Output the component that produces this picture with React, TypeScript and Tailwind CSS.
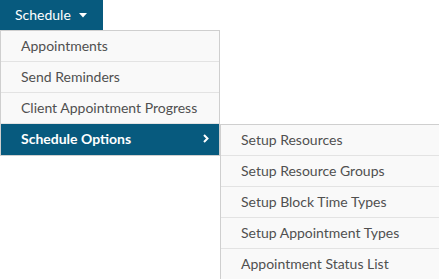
const mainItems = ['Appointments', 'Send Reminders', 'Client Appointment Progress'];

const subItems = [
  'Setup Resources',
  'Setup Resource Groups',
  'Setup Block Time Types',
  'Setup Appointment Types',
  'Appointment Status List',
];

export default function App() {
  return (
    <div className="w-[439px] h-[279px] bg-white font-['Lato',sans-serif] text-[14px]">
      {/* top nav button */}
      <div className="w-[103px] h-[30px] bg-[#075a7e] text-white flex items-center pl-[15px] pb-[1px] gap-[8px]">
        <span>Schedule</span>
        <svg width="8" height="5" viewBox="0 0 8 5" className="mt-[1px]">
          <path d="M0 0h8L4 4.5z" fill="white" />
        </svg>
      </div>

      {/* dropdown */}
      <div className="w-[220px] border border-[#cfcfcf] bg-[#f9f9f9]">
        {mainItems.map((item) => (
          <div
            key={item}
            className="h-[31px] border-b border-[#e3e3e3] flex items-center pl-[20px] pb-[2px] text-[#505050]"
          >
            {item}
          </div>
        ))}
        <div className="relative h-[31px] bg-[#075a7e] text-white font-bold flex items-center justify-between pl-[20px] pr-[10px] pb-[2px]">
          <span>Schedule Options</span>
          <svg width="6" height="9" viewBox="0 0 6 9">
            <path d="M1 1l3.5 3.5L1 8" stroke="white" strokeWidth="2" fill="none" />
          </svg>

          {/* flyout */}
          <div className="absolute left-[219px] top-0 w-[220px] border border-[#cfcfcf] bg-[#f9f9f9] font-normal">
            {subItems.map((item, i) => (
              <div
                key={item}
                className={`flex items-center pl-[20px] pb-[2px] text-[#505050] ${
                  i < subItems.length - 1 ? 'h-[31px] border-b border-[#e3e3e3]' : 'h-[30px]'
                }`}
              >
                {item}
              </div>
            ))}
          </div>
        </div>
      </div>
    </div>
  );
}
